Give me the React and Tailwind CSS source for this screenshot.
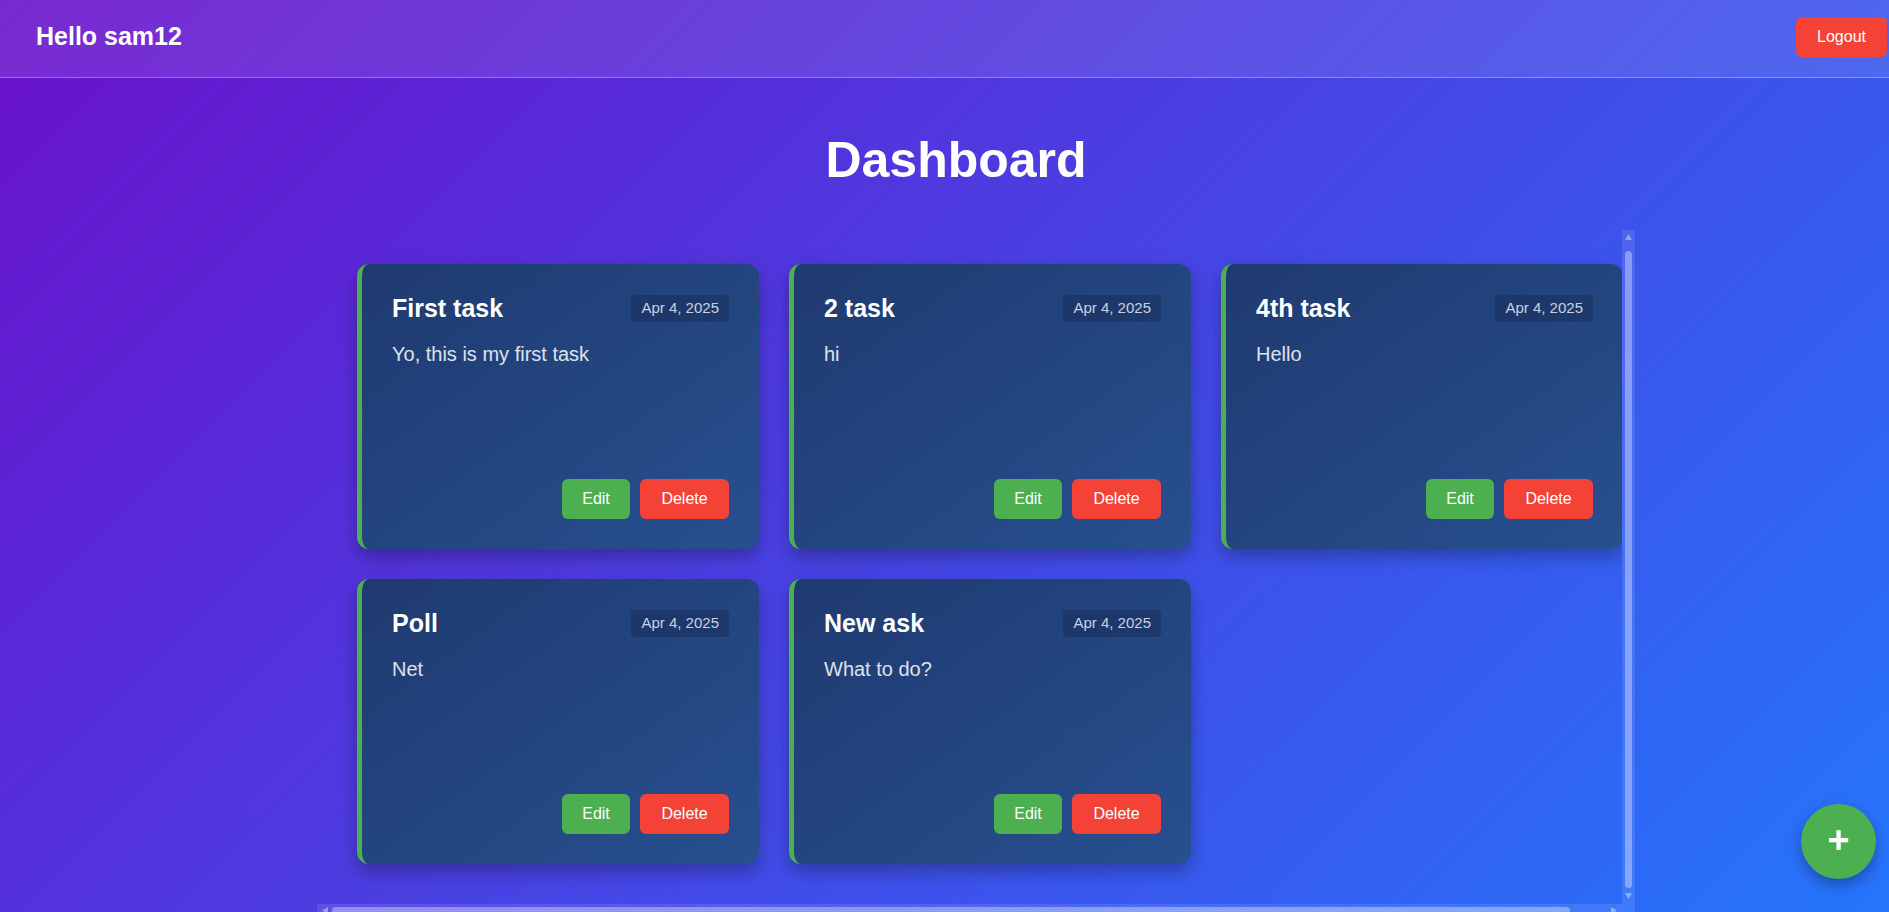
import { useState } from "react";

const initialTasks = [
  { id: 1, title: "First task", description: "Yo, this is my first task", date: "Apr 4, 2025" },
  { id: 2, title: "2 task", description: "hi", date: "Apr 4, 2025" },
  { id: 3, title: "4th task", description: "Hello", date: "Apr 4, 2025" },
  { id: 4, title: "Poll", description: "Net", date: "Apr 4, 2025" },
  { id: 5, title: "New ask", description: "What to do?", date: "Apr 4, 2025" },
];

function TaskCard({ task, onDelete }) {
  return (
    <div className="h-[285px] flex flex-col rounded-xl border-l-[5px] border-[#4caf50] bg-gradient-to-br from-[#1f3a70] to-[#27508f] p-[30px] shadow-[0_8px_18px_rgba(0,0,0,0.28)]">
      <div className="flex items-center justify-between mb-[17px]">
        <h3 className="text-[25px] font-bold leading-[28px]">{task.title}</h3>
        <span className="h-[27px] flex items-center px-[10px] rounded bg-[#1d3566]/80 text-[15px] text-[#c9d1e0]">
          {task.date}
        </span>
      </div>
      <p className="text-[20px] text-white/85">{task.description}</p>
      <div className="mt-auto flex justify-end gap-[10px]">
        <button className="w-[68px] h-10 rounded-md bg-[#4caf50] text-base">Edit</button>
        <button
          onClick={() => onDelete(task.id)}
          className="w-[89px] h-10 rounded-md bg-[#f44336] text-base"
        >
          Delete
        </button>
      </div>
    </div>
  );
}

export default function App() {
  const [tasks, setTasks] = useState(initialTasks);

  const handleDelete = (id) => {
    setTasks((prev) => prev.filter((t) => t.id !== id));
  };

  return (
    <div className="h-screen overflow-hidden bg-[linear-gradient(135deg,#6a11cb_0%,#2575fc_100%)] font-['Liberation_Sans',Arial,sans-serif] text-white">
      {/* Top bar */}
      <header className="h-[78px] flex items-center justify-between pl-9 pr-[2px] pb-[3px] bg-white/10 border-b border-white/30">
        <h2 className="text-[25px] font-bold">Hello sam12</h2>
        <button className="w-[91px] h-10 rounded-md bg-[#f44336] text-base">Logout</button>
      </header>

      <h1 className="mt-[54px] pl-[23px] text-center text-[50px] font-bold leading-[57px]">Dashboard</h1>

      {/* Task list with scrollbars */}
      <div className="mt-[41px] ml-[317px] w-[1318px] flex flex-col">
        <div className="flex h-[674px]">
          <div className="flex-1 overflow-hidden pl-10 pt-[34px]">
            <div className="grid grid-cols-[repeat(3,402px)] gap-[30px]">
              {tasks.map((task) => (
                <TaskCard key={task.id} task={task} onDelete={handleDelete} />
              ))}
            </div>
          </div>
          <div className="w-[13px] bg-white/10 flex flex-col items-center pt-1 pb-[5px]">
            <svg width="7" height="6" viewBox="0 0 7 6" className="fill-white/40">
              <path d="M3.5 0L7 6H0z" />
            </svg>
            <div className="mt-[11px] w-[7px] flex-1 rounded-full bg-white/35" />
            <svg width="7" height="6" viewBox="0 0 7 6" className="mt-[5px] fill-white/40">
              <path d="M0 0h7L3.5 6z" />
            </svg>
          </div>
        </div>
        <div className="h-[13px] bg-white/10 flex items-center pl-[5px] pr-[18px]">
          <svg width="6" height="7" viewBox="0 0 6 7" className="fill-white/40">
            <path d="M0 3.5L6 0v7z" />
          </svg>
          <div className="ml-[4px] h-[7px] w-[1238px] rounded-full bg-white/35" />
          <div className="flex-1" />
          <svg width="6" height="7" viewBox="0 0 6 7" className="fill-white/40">
            <path d="M6 3.5L0 0v7z" />
          </svg>
        </div>
      </div>

      {/* Floating add button */}
      <button className="fixed right-[13px] bottom-[33px] w-[75px] h-[75px] rounded-full bg-[#4caf50] flex items-center justify-center text-[38px] font-bold leading-none shadow-[0_6px_14px_rgba(0,0,0,0.3)]">
        <span className="-mt-1">+</span>
      </button>
    </div>
  );
}
